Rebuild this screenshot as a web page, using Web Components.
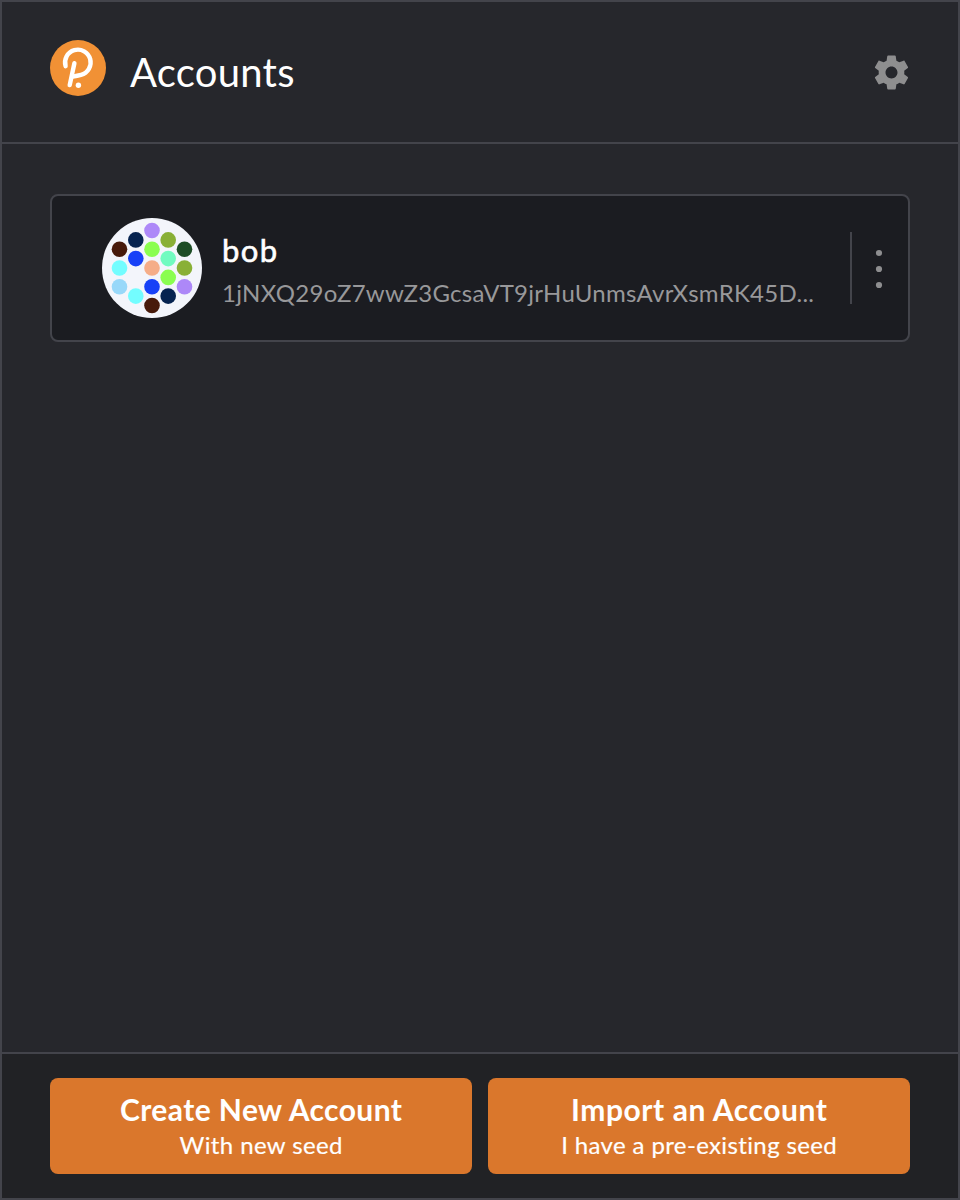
<!DOCTYPE html>
<html lang="en">
<head>
<meta charset="utf-8">
<title>Accounts</title>
<style>
body { margin: 0; background: #26272c; font-family: Lato, "Open Sans", sans-serif; color: #fff; }
</style>
</head>
<body>
<wallet-app></wallet-app>
<script>
const define = (name, html, ready) => {
  const template = document.createElement('template');
  template.innerHTML = html;
  customElements.define(name, class extends HTMLElement {
    constructor() {
      super();
      this.attachShadow({ mode: 'open' }).append(template.content.cloneNode(true));
    }
    connectedCallback() { if (ready) ready(this); }
  });
};

// A single line of text, tracked so that it fills the given width.
define('tracked-text', `
<style>:host { display: block; white-space: nowrap; } span { display: inline-block; }</style>
<span><slot></slot></span>`, el => {
  const span = el.shadowRoot.querySelector('span');
  const count = el.textContent.length;
  const natural = span.getBoundingClientRect().width;
  const spacing = (Number(el.getAttribute('width')) - natural) / (count - 1);
  span.style.letterSpacing = spacing.toFixed(3) + 'px';
  span.style.marginRight = (-spacing).toFixed(3) + 'px';
});

define('brand-logo', `
<style>:host { display: block; width: 56px; height: 56px; } svg { display: block; }</style>
<svg width="56" height="56" viewBox="0 0 56 56" fill="none">
  <circle cx="28" cy="28" r="28" fill="#f19135"/>
  <g stroke="#fff" stroke-width="4.4" stroke-linecap="round">
    <path d="M15.6 26.2A12.8 12.8 0 1 1 31 34.9Q27.5 35.8 22.8 36.6"/>
    <path d="M24.4 23.2L19.7 45.1"/>
  </g>
  <circle cx="28.4" cy="45.2" r="2.7" fill="#fff"/>
</svg>`);

define('settings-icon', `
<style>:host { display: block; width: 41px; height: 41px; } svg { display: block; }</style>
<svg width="41" height="41" viewBox="0 0 24 24" fill="#8e8e8f">
  <path d="M19.43 12.98c.04-.32.07-.64.07-.98s-.03-.66-.07-.98l2.11-1.65c.19-.15.24-.42.12-.64l-2-3.46c-.12-.22-.39-.3-.61-.22l-2.49 1c-.52-.4-1.08-.73-1.69-.98l-.38-2.65C14.46 2.18 14.25 2 14 2h-4c-.25 0-.46.18-.49.42l-.38 2.65c-.61.25-1.17.59-1.69.98l-2.49-1c-.23-.09-.49 0-.61.22l-2 3.46c-.13.22-.07.49.12.64l2.11 1.65c-.04.32-.07.65-.07.98s.03.66.07.98l-2.11 1.65c-.19.15-.24.42-.12.64l2 3.46c.12.22.39.3.61.22l2.49-1c.52.4 1.08.73 1.69.98l.38 2.65c.03.24.24.42.49.42h4c.25 0 .46-.18.49-.42l.38-2.65c.61-.25 1.17-.59 1.69-.98l2.49 1c.23.09.49 0 .61-.22l2-3.46c.12-.22.07-.49-.12-.64l-2.11-1.65zM12 15.5c-1.93 0-3.5-1.57-3.5-3.5s1.57-3.5 3.5-3.5 3.5 1.57 3.5 3.5-1.57 3.5-3.5 3.5z"/>
</svg>`);

define('identity-icon', `
<style>:host { display: block; width: 100px; height: 100px; } svg { display: block; }</style>
<svg width="100" height="100" viewBox="0 0 100 100">
  <circle cx="50" cy="50" r="50" fill="#f3f5fb"/>
  <circle cx="50" cy="12.5" r="7.8" fill="#ad88f8"/>
  <circle cx="33.8" cy="21.9" r="7.8" fill="#062350"/>
  <circle cx="66.2" cy="21.9" r="7.8" fill="#89b036"/>
  <circle cx="17.5" cy="31.2" r="7.8" fill="#471a0b"/>
  <circle cx="50" cy="31.2" r="7.8" fill="#8afe50"/>
  <circle cx="82.5" cy="31.2" r="7.8" fill="#1d4d26"/>
  <circle cx="33.8" cy="40.6" r="7.8" fill="#1741f7"/>
  <circle cx="66.2" cy="40.6" r="7.8" fill="#71fbc0"/>
  <circle cx="17.5" cy="50" r="7.8" fill="#73fdff"/>
  <circle cx="50" cy="50" r="7.8" fill="#f5ad88"/>
  <circle cx="82.5" cy="50" r="7.8" fill="#89b036"/>
  <circle cx="66.2" cy="59.4" r="7.8" fill="#8afe50"/>
  <circle cx="17.5" cy="68.8" r="7.8" fill="#98d8f9"/>
  <circle cx="50" cy="68.8" r="7.8" fill="#1741f7"/>
  <circle cx="82.5" cy="68.8" r="7.8" fill="#ad88f8"/>
  <circle cx="33.8" cy="78.1" r="7.8" fill="#73fdff"/>
  <circle cx="66.2" cy="78.1" r="7.8" fill="#062350"/>
  <circle cx="50" cy="87.5" r="7.8" fill="#471a0b"/>
</svg>`);

define('app-header', `
<style>
:host { display: flex; align-items: flex-start; box-sizing: border-box; height: 142px; padding: 38px 46px 0 48px; border-bottom: 2px solid #43444b; }
.title { margin: 6px 0 0 24px; font-size: 40px; line-height: 52px; }
settings-icon { margin: 11.5px 0 0 auto; }
</style>
<brand-logo></brand-logo>
<div class="title"><slot></slot></div>
<settings-icon></settings-icon>`);

define('account-card', `
<style>
:host { display: flex; align-items: center; box-sizing: border-box; height: 148px; padding-left: 50px; background: #1b1c21; border: 2px solid #43444b; border-radius: 8px; }
.text { margin-left: 20px; padding-top: 3px; flex: 1; min-width: 0; }
.name { font-size: 31px; line-height: 40px; -webkit-text-stroke: .6px currentColor; }
.address { margin-top: 7px; font-size: 24px; line-height: 32px; color: #98989a; }
.menu { display: flex; justify-content: center; align-items: center; box-sizing: border-box; width: 58px; height: 72px; border-left: 2px solid #43444b; padding-right: 2px; }
svg { display: block; }
</style>
<identity-icon></identity-icon>
<div class="text"><div class="name"><slot name="name"></slot></div><div class="address"><slot></slot></div></div>
<div class="menu"><svg width="8" height="42" viewBox="0 0 8 42" fill="#8e8e90"><circle cx="4" cy="6" r="3.1"/><circle cx="4" cy="22" r="3.1"/><circle cx="4" cy="38" r="3.1"/></svg></div>`);

define('action-button', `
<style>
:host { display: flex; flex-direction: column; align-items: center; box-sizing: border-box; height: 96px; padding-top: 12px; background: #da772c; border-radius: 8px; }
.label { font-size: 30px; line-height: 38px; font-weight: 700; }
.hint { font-size: 24px; line-height: 32px; -webkit-text-stroke: .2px currentColor; margin-top: 1px; }
</style>
<div class="label"><slot></slot></div><div class="hint"><slot name="hint"></slot></div>`);

define('wallet-app', `
<style>
:host { display: flex; flex-direction: column; box-sizing: border-box; height: 1200px; border: 2px solid #43444b; }
main { flex: 1; padding: 50px 48px 0; }
footer { display: grid; grid-template-columns: 1fr 1fr; gap: 16px; box-sizing: border-box; height: 146px; padding: 24px 48px 0; background: #212225; border-top: 2px solid #43444b; }
</style>
<app-header><tracked-text width="164.5">Accounts</tracked-text></app-header>
<main>
  <account-card><tracked-text slot="name" width="55">bob</tracked-text><tracked-text width="592">1jNXQ29oZ7wwZ3GcsaVT9jrHuUnmsAvrXsmRK45D...</tracked-text></account-card>
</main>
<footer>
  <action-button><tracked-text width="282">Create New Account</tracked-text><tracked-text slot="hint" width="163">With new seed</tracked-text></action-button>
  <action-button><tracked-text width="256">Import an Account</tracked-text><tracked-text slot="hint" width="276">I have a pre-existing seed</tracked-text></action-button>
</footer>`);
</script>
</body>
</html>
